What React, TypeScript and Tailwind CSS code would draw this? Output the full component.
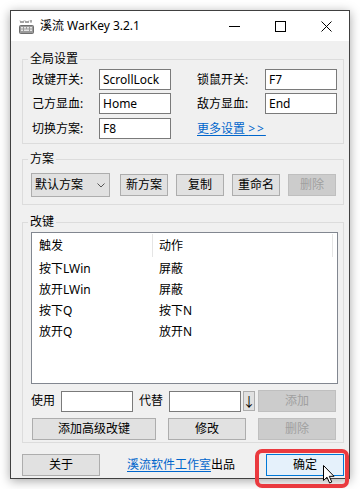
type BtnProps = {
  children: React.ReactNode;
  className?: string;
  disabled?: boolean;
};

const Btn = ({ children, className = "", disabled = false }: BtnProps) => (
  <button
    className={`flex h-[22px] items-center justify-center border leading-[14px] ${
      disabled
        ? "border-[#bfbfbf] bg-[#cccccc] text-[#a0a0a0]"
        : "border-[#adadad] bg-[#e1e1e1] text-black"
    } ${className}`}
  >
    {children}
  </button>
);

const Field = ({ value = "", className = "" }: { value?: string; className?: string }) => (
  <div
    className={`flex h-[21px] w-[72px] items-center border border-[#7a7a7a] bg-white pl-[3px] leading-[14px] ${className}`}
  >
    {value}
  </div>
);

const KeyboardIcon = () => (
  <svg width="15" height="15" viewBox="0 0 15 15">
    <path d="M1 1.5 L2 4 L3 2 L4 4 L5 1.5 M6 1.5 L7 4 L8 2 L9 4 L10 1.5 M11 2 L13 2 M12 1 L12 4" stroke="#7a7a7a" strokeWidth="0.8" fill="none" />
    <rect x="0.5" y="6.5" width="14" height="8" rx="1" fill="#9a9a9a" stroke="#6e6e6e" />
    <rect x="2" y="8" width="2" height="1.5" fill="#e6e6e6" />
    <rect x="5" y="8" width="2" height="1.5" fill="#e6e6e6" />
    <rect x="8" y="8" width="2" height="1.5" fill="#e6e6e6" />
    <rect x="11" y="8" width="2" height="1.5" fill="#e6e6e6" />
    <rect x="2" y="10.5" width="2" height="1.5" fill="#e6e6e6" />
    <rect x="5" y="10.5" width="5" height="1.5" fill="#e6e6e6" />
    <rect x="11" y="10.5" width="2" height="1.5" fill="#e6e6e6" />
  </svg>
);

const rows = [
  ["按下LWin", "屏蔽"],
  ["放开LWin", "屏蔽"],
  ["按下Q", "按下N"],
  ["放开Q", "放开N"],
];

export default function App() {
  return (
    <div className="relative h-[489px] w-[360px] overflow-hidden bg-white p-[10px] text-[12px] text-black font-['Noto_Sans','Noto_Sans_CJK_SC',sans-serif]">
      <div className="w-[340px] border border-[#404040] shadow-[0_2px_10px_rgba(0,0,0,0.35)]">
        {/* title bar */}
        <div className="flex h-[30px] items-center bg-white">
          <div className="ml-[8px] flex h-[15px] w-[15px] items-center">
            <KeyboardIcon />
          </div>
          <span className="ml-[6px] text-[12px] leading-[16px]">溪流 WarKey 3.2.1</span>
          <div className="ml-auto flex h-full">
            <div className="flex w-[46px] items-center justify-center">
              <svg width="11" height="11" viewBox="0 0 11 11">
                <path d="M0 5.5 H11" stroke="#000" strokeWidth="1" />
              </svg>
            </div>
            <div className="flex w-[46px] items-center justify-center">
              <svg width="11" height="11" viewBox="0 0 11 11">
                <rect x="0.5" y="0.5" width="10" height="10" stroke="#000" fill="none" />
              </svg>
            </div>
            <div className="flex w-[46px] items-center justify-center">
              <svg width="11" height="11" viewBox="0 0 11 11">
                <path d="M0.5 0.5 L10.5 10.5 M10.5 0.5 L0.5 10.5" stroke="#000" strokeWidth="1" />
              </svg>
            </div>
          </div>
        </div>

        {/* client */}
        <div className="flex h-[437px] flex-col bg-[#f0f0f0] pl-[11px] pr-[5px] pt-[11px]">
          <fieldset className="border border-[#dcdcdc] pb-[4px] pl-[9px]">
            <legend className="-ml-[4px] px-[2px] leading-[14px]">全局设置</legend>
            <div className="mt-[3px] flex items-center">
              <span className="w-[67px]">改键开关:</span>
              <Field value="ScrollLock" />
              <span className="ml-[26px] w-[68px]">锁鼠开关:</span>
              <Field value="F7" />
            </div>
            <div className="mt-[3px] flex items-center">
              <span className="w-[67px]">己方显血:</span>
              <Field value="Home" />
              <span className="ml-[26px] w-[68px]">敌方显血:</span>
              <Field value="End" />
            </div>
            <div className="mt-[4px] flex items-center">
              <span className="w-[67px]">切换方案:</span>
              <Field value="F8" />
              <span className="ml-[26px] text-[#0066cc] underline underline-offset-2">
                更多设置 <span className="tracking-[2px]">&gt;&gt;</span>
              </span>
            </div>
          </fieldset>

          <fieldset className="mt-[8px] border border-[#dcdcdc] pb-[7px] pl-[8px]">
            <legend className="-ml-[3px] px-[2px] leading-[14px]">方案</legend>
            <div className="mt-[7px] flex items-center">
              <div className="flex h-[24px] w-[79px] items-center border border-[#adadad] bg-[#e1e1e1] pl-[3px] leading-[14px]">
                默认方案
                <svg className="ml-auto mr-[4px]" width="8" height="5" viewBox="0 0 8 5">
                  <path d="M0.5 0.5 L4 4 L7.5 0.5" stroke="#555" fill="none" />
                </svg>
              </div>
              <Btn className="ml-[10px] w-[48px]">新方案</Btn>
              <Btn className="ml-[8px] w-[48px]">复制</Btn>
              <Btn className="ml-[8px] w-[48px]">重命名</Btn>
              <Btn className="ml-[8px] w-[48px]" disabled>删除</Btn>
            </div>
          </fieldset>

          <fieldset className="mt-[10px] border border-[#dcdcdc] pb-[2px] pl-[8px]">
            <legend className="-ml-[3px] px-[2px] leading-[14px]">改键</legend>
            <div className="mt-[3px] h-[152px] w-[307px] border border-[#828790] bg-white">
              <div className="flex h-[25px] items-center">
                <span className="w-[120px] pl-[7px]">触发</span>
                <div className="h-[23px] w-px bg-[#e5e5e5]" />
                <span className="w-[179px] pl-[6px]">动作</span>
                <div className="h-[23px] w-px bg-[#e5e5e5]" />
              </div>
              {rows.map(([a, b]) => (
                <div key={a} className="flex h-[21px] items-center">
                  <span className="w-[121px] pl-[7px]">{a}</span>
                  <span className="pl-[6px]">{b}</span>
                </div>
              ))}
            </div>
            <div className="mt-[6px] flex h-[22px] items-center">
              <span className="w-[30px]">使用</span>
              <Field className="h-[20px]" />
              <span className="ml-[6px] w-[30px]">代替</span>
              <Field className="h-[20px]" />
              <div className="ml-[2px] flex h-[20px] w-[12px] items-center justify-center border border-[#adadad] bg-[#e1e1e1] text-[13px] leading-[14px]">
                ↓
              </div>
              <Btn className="ml-[3px] w-[78px]" disabled>添加</Btn>
            </div>
            <div className="mt-[6px] flex items-center">
              <Btn className="ml-[1px] w-[124px]">添加高级改键</Btn>
              <Btn className="ml-[12px] w-[78px]">修改</Btn>
              <Btn className="ml-[12px] w-[78px]" disabled>删除</Btn>
            </div>
          </fieldset>

          <div className="mt-[11px] flex items-center">
            <Btn className="w-[78px]">关于</Btn>
            <span className="ml-[27px] leading-[16px]">
              <span className="text-[#0066cc] underline underline-offset-2">溪流软件工作室</span>出品
            </span>
            <button className="ml-auto flex h-[22px] w-[78px] items-center justify-center border border-[#0078d7] bg-[#e5f1fb] leading-[14px]">
              确定
            </button>
          </div>
        </div>
      </div>

      {/* annotation highlight */}
      <div className="absolute left-[255px] top-[449px] h-[39px] w-[94px] rounded-[7px] border-[4px] border-[#ea3a3f]" />
      <svg className="absolute left-[323px] top-[465px]" width="13" height="19" viewBox="0 0 13 19">
        <path d="M0.5 0.5 L0.5 15.5 L4 12.2 L6.6 18 L8.8 17 L6.3 11.3 L11 11.3 Z" fill="#fff" stroke="#000" strokeWidth="1" strokeLinejoin="round" />
      </svg>
    </div>
  );
}
